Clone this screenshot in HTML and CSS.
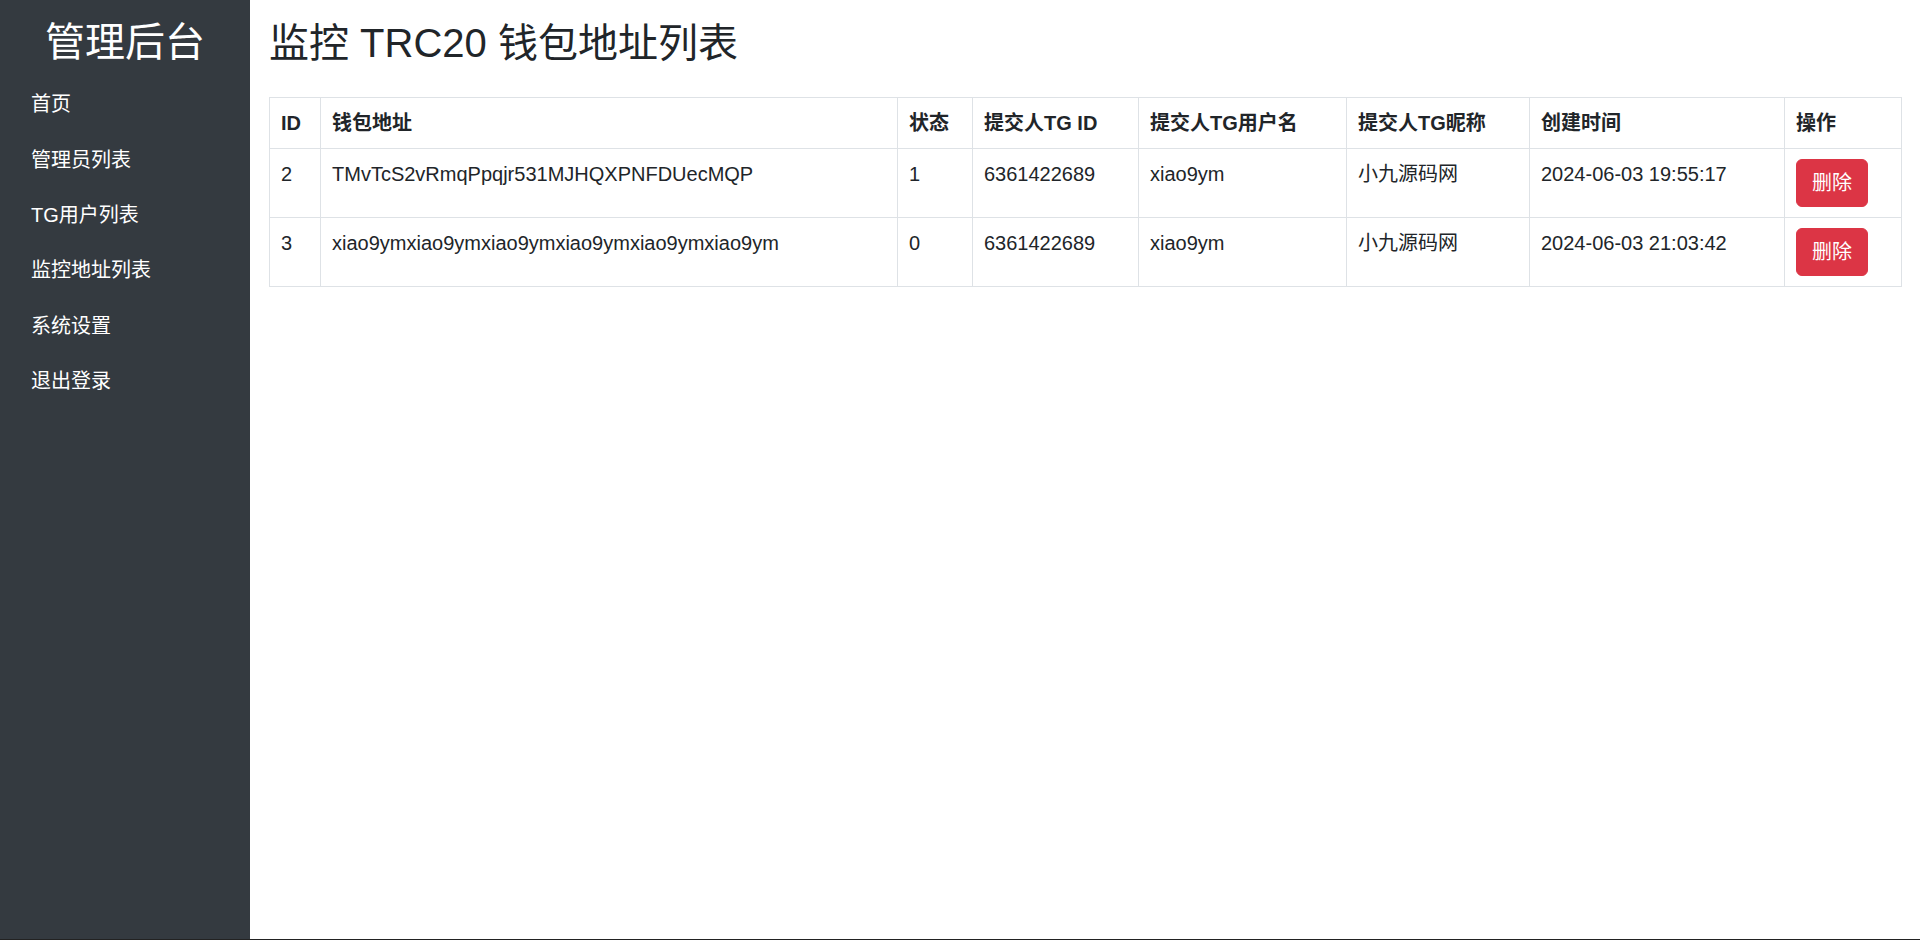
FILE: index.html
```html
<!DOCTYPE html>
<html lang="zh-CN">
<head>
<meta charset="utf-8">
<title>监控 TRC20 钱包地址列表</title>
<link rel="stylesheet" href="styles.css">
</head>
<body>
<div class="app">
  <aside class="sidebar">
    <div class="brand">管理后台</div>
    <nav class="nav">
      <a class="nav-link" href="#">首页</a>
      <a class="nav-link" href="#">管理员列表</a>
      <a class="nav-link" href="#">TG用户列表</a>
      <a class="nav-link" href="#">监控地址列表</a>
      <a class="nav-link" href="#">系统设置</a>
      <a class="nav-link" href="#">退出登录</a>
    </nav>
  </aside>
  <main class="main">
    <h1 class="page-title">监控 TRC20 钱包地址列表</h1>
    <table class="data-table">
      <thead>
        <tr>
          <th class="c-id">ID</th>
          <th class="c-addr">钱包地址</th>
          <th class="c-status">状态</th>
          <th class="c-tgid">提交人TG ID</th>
          <th class="c-user">提交人TG用户名</th>
          <th class="c-nick">提交人TG昵称</th>
          <th class="c-time">创建时间</th>
          <th class="c-act">操作</th>
        </tr>
      </thead>
      <tbody>
        <tr>
          <td>2</td>
          <td>TMvTcS2vRmqPpqjr531MJHQXPNFDUecMQP</td>
          <td>1</td>
          <td>6361422689</td>
          <td>xiao9ym</td>
          <td>小九源码网</td>
          <td>2024-06-03 19:55:17</td>
          <td><button class="btn-danger" type="button">删除</button></td>
        </tr>
        <tr>
          <td>3</td>
          <td>xiao9ymxiao9ymxiao9ymxiao9ymxiao9ymxiao9ym</td>
          <td>0</td>
          <td>6361422689</td>
          <td>xiao9ym</td>
          <td>小九源码网</td>
          <td>2024-06-03 21:03:42</td>
          <td><button class="btn-danger" type="button">删除</button></td>
        </tr>
      </tbody>
    </table>
  </main>
</div>
</body>
</html>
```
FILE: styles.css
```css
* {
  box-sizing: border-box;
}

html, body {
  margin: 0;
  padding: 0;
}

body {
  font-family: "Liberation Sans", Arial, "Noto Sans CJK SC", sans-serif;
  font-size: 20px;
  line-height: 30px;
  color: #212529;
  background: #fff;
}

.app {
  display: flex;
  height: 940px;
  border-bottom: 1px solid #222;
}

.sidebar {
  width: 250px;
  flex: 0 0 250px;
  background: #343a40;
  color: #fff;
  padding-top: 18px;
}

.brand {
  text-align: center;
  font-size: 40px;
  line-height: 48px;
  margin-bottom: 11px;
}

.nav {
  display: flex;
  flex-direction: column;
}

.nav-link {
  display: block;
  color: #fff;
  text-decoration: none;
  font-size: 20px;
  line-height: 31px;
  padding: 12.2px 20px 12.2px 31px;
}

.main {
  flex: 1;
  padding: 19px 19px 0 19px;
  min-width: 0;
}

.page-title {
  margin: 0 0 30px 0;
  font-size: 40px;
  line-height: 48px;
  font-weight: 400;
}

.data-table {
  width: 1632px;
  border-collapse: collapse;
  table-layout: fixed;
}

.data-table th,
.data-table td {
  border: 1px solid #dee2e6;
  padding: 10px 11px;
  text-align: left;
  vertical-align: top;
  line-height: 30px;
  white-space: nowrap;
}

.data-table th {
  font-weight: 700;
}

.c-id { width: 51px; }
.c-addr { width: 577px; }
.c-status { width: 75px; }
.c-tgid { width: 166px; }
.c-user { width: 208px; }
.c-nick { width: 183px; }
.c-time { width: 255px; }
.c-act { width: 117px; }

.btn-danger {
  display: inline-block;
  font-family: "Liberation Sans", Arial, "Noto Sans CJK SC", sans-serif;
  font-size: 20px;
  line-height: 30px;
  padding: 8px 15px;
  color: #fff;
  background: #dc3545;
  border: 1px solid #dc3545;
  border-radius: 6px;
  cursor: pointer;
}
```
